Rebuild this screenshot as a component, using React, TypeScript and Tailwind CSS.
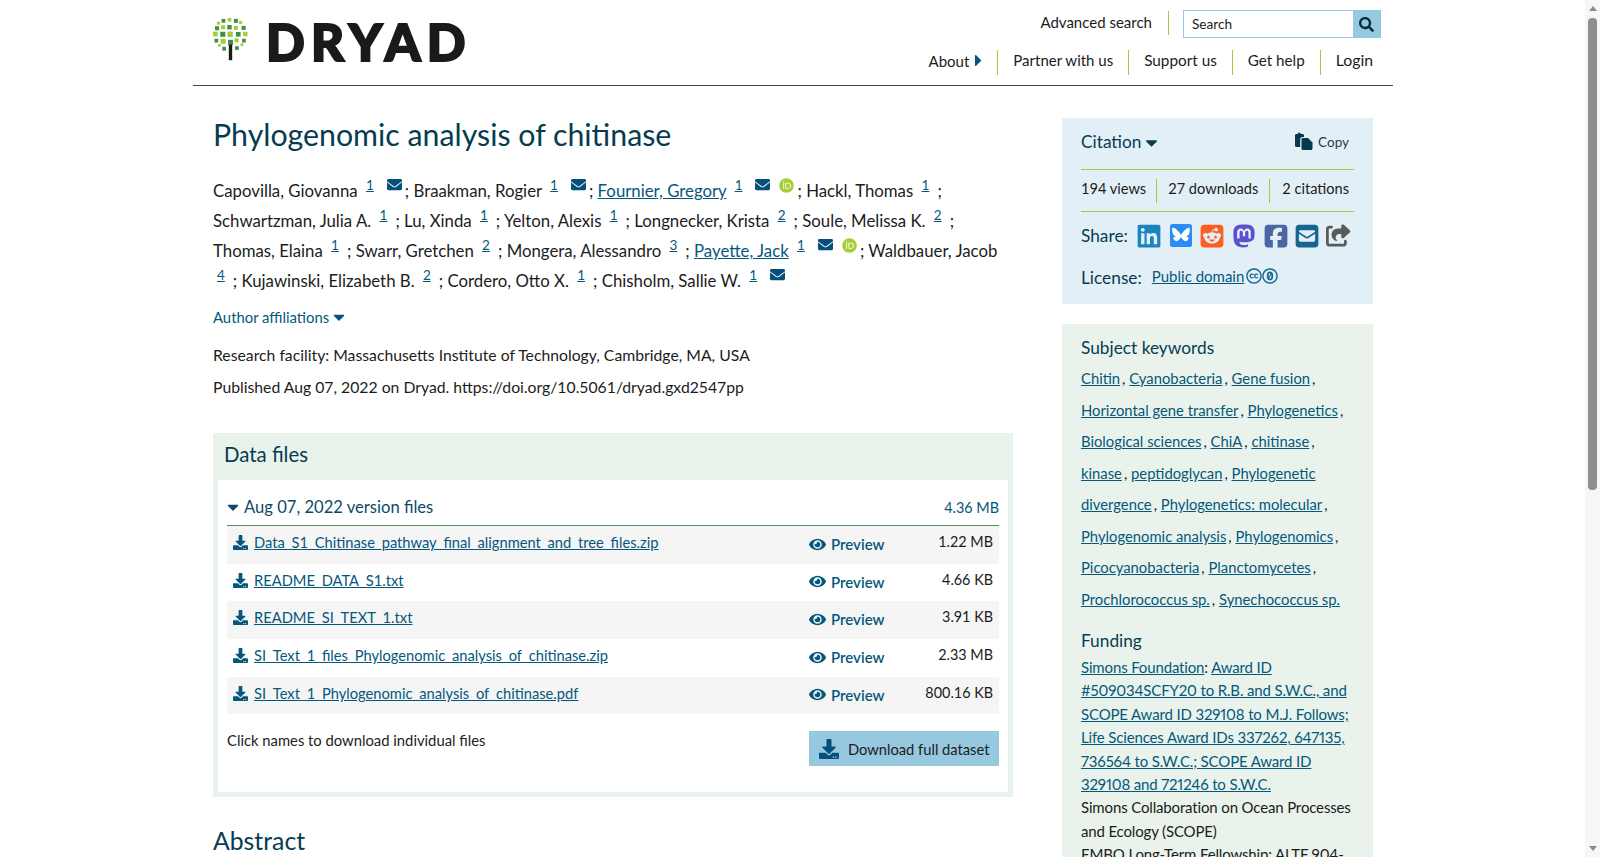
import { Fragment } from "react";
import {
  FaCaretDown,
  FaCaretRight,
  FaCreativeCommons,
  FaCreativeCommonsZero,
  FaDownload,
  FaEnvelope,
  FaEye,
  FaOrcid,
  FaSearch,
} from "react-icons/fa";
import {
  FaLinkedin,
  FaMastodon,
  FaShareFromSquare,
  FaSquareEnvelope,
  FaSquareFacebook,
  FaSquareReddit,
} from "react-icons/fa6";

const authors = [
  { name: "Capovilla, Giovanna", aff: "1", mail: true },
  { name: "Braakman, Rogier", aff: "1", mail: true },
  { name: "Fournier, Gregory", aff: "1", mail: true, orcid: true },
  { name: "Hackl, Thomas", aff: "1" },
  { name: "Schwartzman, Julia A.", aff: "1" },
  { name: "Lu, Xinda", aff: "1" },
  { name: "Yelton, Alexis", aff: "1" },
  { name: "Longnecker, Krista", aff: "2" },
  { name: "Soule, Melissa K.", aff: "2" },
  { name: "Thomas, Elaina", aff: "1" },
  { name: "Swarr, Gretchen", aff: "2" },
  { name: "Mongera, Alessandro", aff: "3" },
  { name: "Payette, Jack", aff: "1", mail: true, orcid: true },
  { name: "Waldbauer, Jacob", aff: "4" },
  { name: "Kujawinski, Elizabeth B.", aff: "2" },
  { name: "Cordero, Otto X.", aff: "1" },
  { name: "Chisholm, Sallie W.", aff: "1", mail: true },
];

const files = [
  { name: "Data_S1_Chitinase_pathway_final_alignment_and_tree_files.zip", size: "1.22 MB" },
  { name: "README_DATA_S1.txt", size: "4.66 KB" },
  { name: "README_SI_TEXT_1.txt", size: "3.91 KB" },
  { name: "SI_Text_1_files_Phylogenomic_analysis_of_chitinase.zip", size: "2.33 MB" },
  { name: "SI_Text_1_Phylogenomic_analysis_of_chitinase.pdf", size: "800.16 KB" },
];

const keywords = [
  "Chitin",
  "Cyanobacteria",
  "Gene fusion",
  "Horizontal gene transfer",
  "Phylogenetics",
  "Biological sciences",
  "ChiA",
  "chitinase",
  "kinase",
  "peptidoglycan",
  "Phylogenetic divergence",
  "Phylogenetics: molecular",
  "Phylogenomic analysis",
  "Phylogenomics",
  "Picocyanobacteria",
  "Planctomycetes",
  "Prochlorococcus sp.",
  "Synechococcus sp.",
];

// [x, y, size, colour] in the logo's own units
const D = "#3f8f46";
const L = "#a5cc3b";
const leaves: [number, number, number, string][] = [
  [118, 60, 11, L], [100, 63, 11, D], [137, 63, 12, D],
  [85, 70, 9, L], [151, 68, 9, L],
  [81, 85, 12, D], [99, 82, 12, L], [118, 82, 13, D], [137, 84, 12, L], [160, 84, 12, D],
  [76, 102, 14, L], [98, 103, 15, D], [120, 103, 16, L], [144, 103, 14, D], [165, 102, 13, L],
  [79, 122, 11, D], [99, 124, 15, L], [121, 127, 15, D], [139, 121, 12, L], [161, 122, 11, D],
  [88, 136, 8, L], [155, 134, 8, L],
  [102, 146, 11, D], [140, 144, 11, D],
];

function Tree() {
  return (
    <svg viewBox="66 52 110 130" className="w-[37px] h-[44px] -ml-px">
      {leaves.map(([x, y, s, c], i) => (
        <rect key={i} x={x - s / 2} y={y - s / 2} width={s} height={s} fill={c} />
      ))}
      <rect x="116" y="133" width="10" height="47" fill="#1a1a1a" />
    </svg>
  );
}

function CopyIcon() {
  return (
    <svg viewBox="0 0 18 18" className="w-[18px] h-[18px] mt-[-3px]" fill="#06384f">
      <path d="M0 3.500C0 2.700.6 2 1.400 2H3V.8h2.600V2h2c.8 0 1.400.7 1.400 1.500V5H7.500C6.100 5 5.200 6 5.200 7.300V15H1.400C.6 15 0 14.400 0 13.600z" />
      <path d="M8 6h5l4.500 4.500v6c0 .8-.6 1.500-1.500 1.500H8c-.9 0-1.500-.7-1.500-1.500V7.500C6.500 6.700 7.100 6 8 6z" />
    </svg>
  );
}

function BlueskyIcon() {
  return (
    <svg viewBox="0 0 24 24" className="w-[26px] h-[23px]">
      <rect x="0.500" y="0" width="23" height="24" rx="3" fill="#2a8cf6" />
      <path
        fill="#fff"
        d="M12 11.500c-.9-1.800-3.400-5-5.700-6.600C4.100 3.400 3.300 3.700 3 4.200c-.3.600-.3 1.700-.1 3.400.3 2.900 1.400 4.900 4.100 5.300-2.700.4-3.800 1.900-2.300 3.600 2.800 3.100 5 .8 7.300-2.600 2.300 3.400 4.500 5.700 7.300 2.600 1.500-1.700.4-3.200-2.300-3.600 2.700-.4 3.800-2.400 4.100-5.300.2-1.700.2-2.800-.1-3.400-.3-.5-1.100-.8-3.300.7-2.300 1.600-4.800 4.800-5.700 6.600z"
      />
    </svg>
  );
}

function Author({ a, last }: { a: (typeof authors)[number]; last: boolean }) {
  return (
    <Fragment>
      {a.orcid ? (
        <a href="#" className="underline text-[#05587c]">{a.name}</a>
      ) : (
        <span>{a.name}</span>
      )}{" "}
      <a href="#" className="underline text-[#05587c] text-[13.5px] align-[7px] leading-none ml-[4px] mr-[5px]">{a.aff}</a>
      {a.mail && <FaEnvelope className="inline relative -top-[8px] text-[#05507a] text-[15px] ml-[8px]" />}
      {a.orcid && <FaOrcid className="inline relative -top-[7px] ml-[9px] text-[#a6ce39] text-[15px]" />}
      {!last && <span className="ml-[3px]">; </span>}
    </Fragment>
  );
}

export default function App() {
  return (
    <div className="flex h-[857px] overflow-hidden bg-white text-[#1c1c1c] text-[15px] font-['Lato',sans-serif]">
      <div className="flex-1 min-w-0">
        <div className="w-[1200px] ml-[193px]">
          <header className="h-[86px] border-b border-[#4a4a4a] flex justify-between pl-5 pr-3">
            <div className="flex items-start pt-[17px]">
              <Tree />
              <span className="ml-[17px] mt-[-1px] font-black text-[51px] leading-[52px] tracking-[6.3px] text-[#1a1a1a] [-webkit-text-stroke:2px_#1a1a1a]">DRYAD</span>
            </div>
            <nav className="flex flex-col items-end pt-[10px]">
              <div className="flex items-center h-7">
                <a href="#" className="pr-4 h-6 mt-[-3px] border-r border-[#a9c842] leading-[22px]">Advanced search</a>
                <div className="ml-[14px] flex h-7 w-[198px] border border-[#96c8e0]">
                  <span className="flex-1 pl-2 text-[13.6px] leading-[26px]">Search</span>
                  <span className="w-[27px] bg-[#96c8e0] flex items-center justify-center text-[#0d2c3a] text-[15px]"><FaSearch /></span>
                </div>
              </div>
              <div className="flex items-center mt-[12px] mr-2 h-[25px]">
                <a href="#" className="pr-[15px] pb-[4px] h-[25px] border-r border-[#a9c842] leading-[20px] flex items-center">About<FaCaretRight className="text-[#05587c] text-[19px] ml-0 -mr-[6px]" /></a>
                <a href="#" className="px-[15px] h-[25px] border-r border-[#a9c842] leading-[20px]">Partner with us</a>
                <a href="#" className="px-[15px] h-[25px] border-r border-[#a9c842] leading-[20px] text-[15.3px]">Support us</a>
                <a href="#" className="px-[15px] h-[25px] border-r border-[#a9c842] leading-[20px] text-[15.2px]">Get help</a>
                <a href="#" className="pl-[15px] h-[25px] leading-[20px] text-[15.8px]">Login</a>
              </div>
            </nav>
          </header>

          <div className="flex px-5 pt-[29px]">
            <main className="w-[800px] shrink-0">
              <h1 className="text-[30.3px] leading-[38px] text-[#063c52]">Phylogenomic analysis of chitinase</h1>
              <p className="mt-[23px] text-[16.8px] leading-[30px]">
                {authors.map((a, i) => (
                  <Author key={a.name} a={a} last={i === authors.length - 1} />
                ))}
              </p>
              <a href="#" className="mt-[9px] flex items-center text-[#05587c] text-[14.85px] leading-[24px]">
                Author affiliations<FaCaretDown className="ml-px text-[18px]" />
              </a>
              <p className="mt-[14px] text-[15.75px] leading-[24px]">Research facility: Massachusetts Institute of Technology, Cambridge, MA, USA</p>
              <p className="mt-[8px] text-[15.75px] leading-[24px]">Published Aug 07, 2022 on Dryad. https://doi.org/10.5061/dryad.gxd2547pp</p>

              <section className="mt-[34px] bg-[#e9f3eb] p-[5px] pt-0 h-[364px] flex flex-col">
                <h2 className="h-[47px] pl-[6px] text-[20.4px] leading-[42px] text-[#063c52]">Data files</h2>
                <div className="flex-1 bg-white px-[9px]">
                  <div className="h-[46px] flex items-center justify-between border-b border-[#5a8a5a] text-[#05587c] pt-[10px]">
                    <span className="flex items-center text-[16.6px] text-[#0b4a68]"><FaCaretDown className="-ml-[3px] mr-[2px] text-[18px]" />Aug 07, 2022 version files</span>
                    <span className="text-[14.4px]">4.36 MB</span>
                  </div>
                  {files.map((f, i) => (
                    <div key={f.name} className={`h-[37.7px] flex items-start pr-[6px] ${i % 2 === 0 ? "bg-[#f5f5f5]" : ""}`}>
                      <FaDownload className="ml-[6px] mt-[9px] text-[#05587c] text-[15px] shrink-0" />
                      <a href="#" className="ml-[6px] w-[555px] mt-[4px] leading-[24px] text-[14.7px] underline text-[#05587c]">{f.name}</a>
                      <a href="#" className="mt-[6px] flex items-center w-[95px] font-semibold text-[#05587c] leading-[24px]"><FaEye className="text-[17px] mr-[5px]" />Preview</a>
                      <span className="flex-1 text-right mt-[4px] text-[14.4px] leading-[24px]">{f.size}</span>
                    </div>
                  ))}
                  <div className="mt-[17px] flex justify-between">
                    <span className="mt-[-3px] text-[14.8px] leading-[24px]">Click names to download individual files</span>
                    <a href="#" className="w-[190px] h-[35px] bg-[#96c8e0] flex items-center whitespace-nowrap text-[14.7px]">
                      <FaDownload className="ml-[10px] mr-[9px] text-[#05507a] text-[20px]" />Download full dataset
                    </a>
                  </div>
                </div>
              </section>
              <h2 className="mt-[27px] text-[24.8px] leading-[34px] text-[#063c52]">Abstract</h2>
            </main>

            <aside className="ml-[49px] w-[311px] mt-[3px]">
              <div className="bg-[#e3eff6] px-[19px] h-[186px] text-[#063c52]">
                <div className="h-[52px] flex justify-between items-center border-b border-[#a9c842]">
                  <span className="flex items-center text-[17.3px] pb-[3px]">Citation<FaCaretDown className="ml-px text-[19px]" /></span>
                  <span className="flex items-center text-[13.5px] mr-[5px] gap-[5px] text-[#1c3c4c] pb-[2px]"><CopyIcon />Copy</span>
                </div>
                <div className="h-[42px] flex items-center border-b border-[#a9c842] text-[#1c1c1c] text-[14.6px]">
                  <span className="pr-[10px] h-6 leading-[19px] border-r border-[#a9c842] whitespace-nowrap">194 views</span>
                  <span className="px-[11px] h-6 leading-[19px] border-r border-[#a9c842] whitespace-nowrap">27 downloads</span>
                  <span className="pl-[12px] h-6 leading-[19px] whitespace-nowrap">2 citations</span>
                </div>
                <div className="h-[44px] pt-[3px] flex items-center text-[17.3px]">
                  Share:
                  <span className="ml-[8px] flex items-center gap-[5.7px] text-[26px]">
                    <FaLinkedin className="text-[#1a84bc]" />
                    <BlueskyIcon />
                    <FaSquareReddit className="text-[#ff5c22]" />
                    <FaMastodon className="text-[#5d4fd0]" />
                    <FaSquareFacebook className="text-[#4a67a4]" />
                    <FaSquareEnvelope className="text-[#14688f]" />
                    <FaShareFromSquare className="text-[#5a5a5a] text-[25px]" />
                  </span>
                </div>
                <div className="mt-[9px] flex items-center text-[17.3px]">
                  License:
                  <a href="#" className="ml-[10px] mt-[-3px] underline text-[#05587c] text-[15px]">Public domain</a>
                  <FaCreativeCommons className="mt-[-3px] ml-[2px] text-[#14688f] text-[16px]" />
                  <FaCreativeCommonsZero className="mt-[-3px] text-[#14688f] text-[16px]" />
                </div>
              </div>

              <div className="mt-[20px] bg-[#e9f3eb] px-[19px] pt-[12px] h-[600px]">
                <h3 className="text-[17.3px] leading-[24px] text-[#063c52]">Subject keywords</h3>
                <p className="mt-[3px] text-[14.8px] leading-[31.5px]">
                  {keywords.map((k, i) => (
                    <Fragment key={k}>
                      <a href="#" className="underline text-[#05587c]">{k}</a>
                      {i < keywords.length - 1 && <span className="ml-[2px]">, </span>}
                    </Fragment>
                  ))}
                </p>
                <h3 className="mt-[14px] text-[17.3px] leading-[24px] text-[#063c52]">Funding</h3>
                <div className="leading-[23.4px] mt-[3px] proportional-nums tracking-[-0.15px]">
                  <p>
                    <a href="#" className="underline text-[#05587c]">Simons Foundation</a>:{" "}
                    <a href="#" className="underline text-[#05587c]">Award ID #509034SCFY20 to R.B. and S.W.C., and SCOPE Award ID 329108 to M.J. Follows; Life Sciences Award IDs 337262, 647135, 736564 to S.W.C.; SCOPE Award ID 329108 and 721246 to S.W.C.</a>
                  </p>
                  <p>Simons Collaboration on Ocean Processes and Ecology (SCOPE)</p>
                  <p>EMBO Long-Term Fellowship: ALTF 904-</p>
                </div>
              </div>
            </aside>
          </div>
        </div>
      </div>

      {/* the window's scroll bar */}
      <div className="w-[15px] shrink-0 bg-[#f7f7f7] flex flex-col items-center">
        <span className="mt-[6px] w-0 h-0 border-x-[4.5px] border-x-transparent border-b-[5px] border-b-[#8a8a8a]" />
        <span className="mt-[7px] w-[9px] h-[472px] rounded-t-[4px] rounded-b-[4px] bg-[#8f8f8f]" />
        <span className="mt-auto mb-[6px] w-0 h-0 border-x-[4.5px] border-x-transparent border-t-[5px] border-t-[#8a8a8a]" />
      </div>
    </div>
  );
}
